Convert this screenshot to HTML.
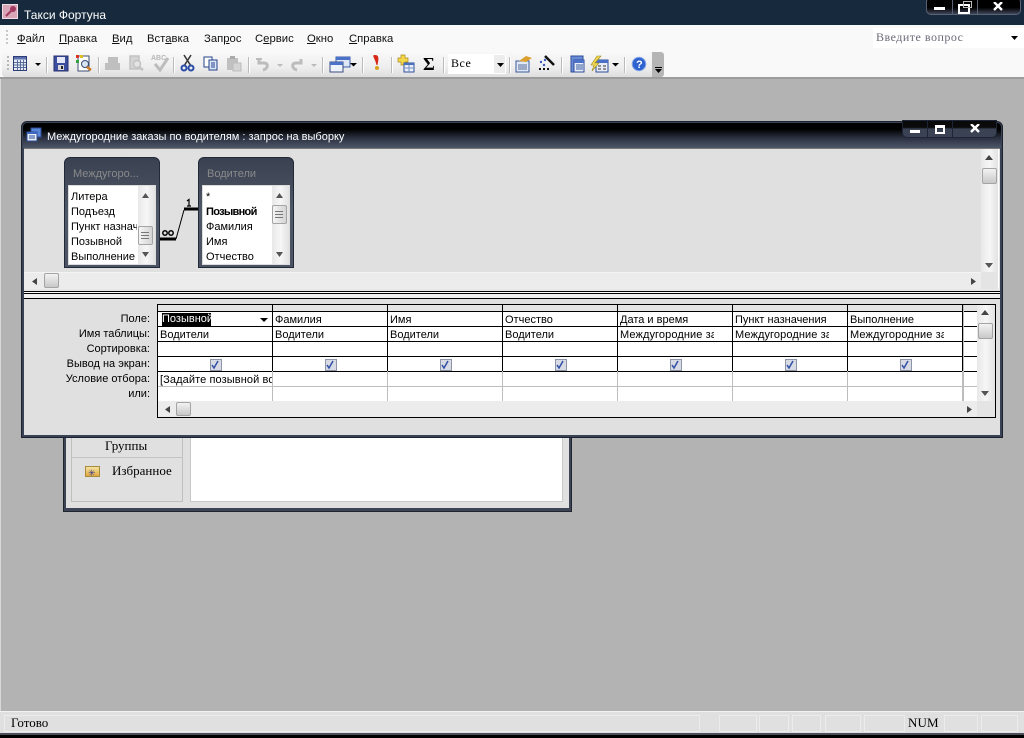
<!DOCTYPE html>
<html><head><meta charset="utf-8"><style>
html,body{margin:0;padding:0}
body{width:1024px;height:738px;overflow:hidden;position:relative;background:#b3b3b3;font-family:"Liberation Sans",sans-serif;font-size:11px;color:#000}
div,span.a,svg{position:absolute}
.t{white-space:nowrap;line-height:14px}
.s{font-family:"Liberation Serif",serif;font-size:12px}
.m{top:32px;font-size:11.3px;color:#111}
.sep{top:57px;width:1px;height:16px;background:#bbb;box-shadow:1px 0 0 #fff}
.l{background:#000}.g{background:#bdbdbd}
.lab{right:874px;text-align:right;font-size:11px}
.c{font-size:11px;overflow:hidden;letter-spacing:.1px}
.chk{width:10px;height:10px;border:1px solid #8d95a8;background:#d8dbe4;top:359px}
.sb{background:linear-gradient(90deg,#e8e8e8,#f6f6f6,#e2e2e2)}
.th{background:linear-gradient(#f2f2f2,#c8c8c8);border:1px solid #a4a4a4;border-radius:2px;box-sizing:border-box}
.tbl{width:96px;height:111px;top:157px;background:linear-gradient(#3a4150,#4f5869 50%,#4b5364);border:1px solid #222a38;box-sizing:border-box;border-radius:6px 6px 0 0}
</style></head><body>
<!-- top title -->
<div style="left:0;top:0;width:1024px;height:25px;background:#172a3d"></div>
<div style="left:2px;top:4px;width:16px;height:15px;background:#d9a6b8;border:1px solid #f0dce4;box-sizing:border-box"></div>
<svg style="left:3px;top:5px" width="14" height="13"><circle cx="10" cy="4" r="3" fill="#a03a60"/><path d="M8 6L3 11" stroke="#a03a60" stroke-width="2"/></svg>
<div class="t" style="left:24px;top:8px;color:#fff;font-size:12px">Такси Фортуна</div>
<div style="left:926px;top:-3px;width:95px;height:18px;background:linear-gradient(#000 60%,#3d4558);border:1px solid #5a6274;border-radius:5px;box-sizing:border-box"></div>
<div style="left:952px;top:0;width:1px;height:15px;background:#5a6274"></div>
<div style="left:977px;top:0;width:1px;height:15px;background:#5a6274"></div>
<div style="left:934px;top:7px;width:11px;height:3px;background:#fff"></div>
<div style="left:958px;top:4px;width:8px;height:6px;border:2px solid #fff"></div>
<div style="left:963px;top:1px;width:7px;height:5px;border:1px solid #bbb"></div>
<svg style="left:993px;top:2px" width="10" height="9"><path d="M1 0L9 8M9 0L1 8" stroke="#fff" stroke-width="2.4"/></svg>
<!-- menu -->
<div style="left:0;top:25px;width:1024px;height:52px;background:#f9f9f9"></div>
<div style="left:6px;top:30px;width:2px;height:14px;background:repeating-linear-gradient(#c8c8c8 0 2px,transparent 2px 4px)"></div>
<div class="t m" style="left:17px"><u>Ф</u>айл</div>
<div class="t m" style="left:59px"><u>П</u>равка</div>
<div class="t m" style="left:112px"><u>В</u>ид</div>
<div class="t m" style="left:147px">Вст<u>а</u>вка</div>
<div class="t m" style="left:204px">Зап<u>р</u>ос</div>
<div class="t m" style="left:255px">С<u>е</u>рвис</div>
<div class="t m" style="left:307px"><u>О</u>кно</div>
<div class="t m" style="left:349px"><u>С</u>правка</div>
<div style="left:873px;top:28px;width:151px;height:20px;background:#fff"></div>
<div class="t s" style="left:876px;top:30px;color:#6a6a78;letter-spacing:.5px">Введите вопрос</div>
<svg style="left:1011px;top:36px" width="7" height="4"><path d="M0 0H7L3.5 4Z"/></svg>
<!-- toolbar -->
<div style="left:2px;top:52px;width:650px;height:25px;background:linear-gradient(#f8f8f8,#eee 60%,#dedede);border-radius:3px 0 0 3px"></div>
<div style="left:652px;top:52px;width:12px;height:25px;background:#b5b5b5;border-radius:0 3px 3px 0"></div>
<div style="left:655px;top:67px;width:7px;height:1px;background:#000"></div>
<svg style="left:655px;top:69px" width="7" height="4"><path d="M0 0H7L3.5 4Z"/></svg>
<div style="left:0;top:77px;width:1024px;height:2px;background:#9c9c9c"></div>
<div style="left:0;top:79px;width:1px;height:633px;background:#d8d8d8"></div>
<div style="left:7px;top:56px;width:2px;height:16px;background:repeating-linear-gradient(#b8b8b8 0 2px,transparent 2px 4px)"></div>
<div class="sep" style="left:46px"></div><div class="sep" style="left:98px"></div><div class="sep" style="left:173px"></div><div class="sep" style="left:248px"></div><div class="sep" style="left:322px"></div><div class="sep" style="left:362px"></div><div class="sep" style="left:391px"></div><div class="sep" style="left:443px"></div><div class="sep" style="left:509px"></div><div class="sep" style="left:561px"></div><div class="sep" style="left:624px"></div>
<svg style="left:0;top:50px" width="660" height="28" fill="none">
<!-- datasheet -->
<rect x="13.5" y="6.500" width="13" height="14" fill="#e8ecf6" stroke="#2b3d72"/><path d="M14 9.500H26V7H14Z" fill="#5a70b0"/><path d="M14 12.500H26M14 15H26M14 17.500H26M17.500 10V20M20.500 10V20M23.500 10V20" stroke="#5a6c9c"/>
<path d="M35 13H41L38 16Z" fill="#000"/>
<!-- save -->
<rect x="54" y="6" width="14" height="15" fill="#3c4ea0" stroke="#26306e"/><rect x="57" y="7" width="8" height="6" fill="#e4e8f6"/><rect x="58" y="15" width="6" height="5" fill="#d8d8d8"/><rect x="61" y="16" width="2" height="3" fill="#222"/>
<!-- search file -->
<rect x="78" y="6" width="11" height="15" fill="#fff" stroke="#3c4e70"/><rect x="76" y="5" width="3" height="3" fill="#e03020"/><rect x="80" y="5" width="3" height="3" fill="#e0c020"/><rect x="76" y="10" width="3" height="3" fill="#30a040"/><circle cx="85" cy="14" r="3.500" fill="#d8e4f4" stroke="#3a4c70"/><path d="M87 17L91 20" stroke="#d07820" stroke-width="2.500"/>
<!-- print disabled -->
<g fill="#bfbfbf"><rect x="105" y="13" width="15" height="7"/><path d="M108 7H118V13H108Z"/></g>
<g stroke="#c2c2c2" stroke-width="1.500"><rect x="130" y="6" width="9" height="13" fill="#d4d4d4"/><circle cx="137" cy="14" r="3.500" fill="#e4e4e4"/><path d="M139 17L143 20" stroke-width="2.500"/></g>
<text x="151" y="10" font-family="Liberation Sans" font-size="7" font-weight="bold" fill="#b8b8b8">ABC</text>
<path d="M155 14L160 20L168 8" stroke="#bdbdbd" stroke-width="3"/>
<!-- cut -->
<path d="M184 5L191 16M191 5L184 16" stroke="#3a3a3a" stroke-width="1.600"/><circle cx="184" cy="18" r="2.500" stroke="#2a4ca8" stroke-width="2"/><circle cx="191" cy="18" r="2.500" stroke="#2a4ca8" stroke-width="2"/>
<!-- copy -->
<rect x="204" y="7" width="8" height="10" fill="#fff" stroke="#24418a"/><rect x="209" y="10" width="8" height="10" fill="#dce6f8" stroke="#24418a"/><path d="M211 13H215M211 15H215M211 17H215" stroke="#24418a"/>
<!-- paste dis -->
<rect x="227" y="8" width="11" height="12" fill="#c0c0c0"/><rect x="230" y="6" width="5" height="3" fill="#aaa"/><rect x="233" y="13" width="8" height="8" fill="#d4d4d4" stroke="#bbb"/>
<!-- undo/redo -->
<path d="M259 9L259 13L264 13C269 13 268 19 263 20" stroke="#bcbcbc" stroke-width="3"/><path d="M256 9H262" stroke="#bcbcbc" stroke-width="2"/>
<path d="M277 14H283L280 17Z" fill="#bbb"/>
<path d="M301 9L301 13L296 13C291 13 292 19 297 20" stroke="#bcbcbc" stroke-width="3"/>
<path d="M311 14H317L314 17Z" fill="#bbb"/>
<!-- window -->
<rect x="336" y="7" width="14" height="10" fill="#dfe6f6" stroke="#3a5aa8"/><path d="M336 7H350V10H336Z" fill="#4a72c8"/><rect x="330" y="12" width="13" height="10" fill="#eef2fa" stroke="#3a4c80"/><path d="M330 12H343V15H330Z" fill="#4a72c8"/>
<path d="M350 13H357L353.500 16.500Z" fill="#000"/>
<!-- exclamation -->
<path d="M375 5C379 5 379 8 377.500 15H376.500C375 8 371 5 375 5Z" fill="#d82818"/><circle cx="377" cy="18" r="2" fill="#d8a020"/>
<!-- add table -->
<path d="M398 8H401V5H405V8H408V12H405V15H401V12H398Z" fill="#f4d848" stroke="#a88820" stroke-width=".7"/><rect x="404" y="13" width="10" height="9" fill="#e8eef8" stroke="#2e5098"/><path d="M404 13H414V15H404Z" fill="#4a70c0"/><path d="M409 15V22M404 18H414" stroke="#7890c0"/>
<!-- props -->
<rect x="516" y="11" width="13" height="11" fill="#dfe8f4" stroke="#3c5a9c"/><path d="M518 15H527M518 17H527M518 19H527" stroke="#5a6c9c"/><path d="M519 11L526 6L532 8L526 12Z" fill="#dca030"/>
<!-- wand -->
<path d="M545 6L554 15" stroke="#111" stroke-width="2.500"/><circle cx="541" cy="12" r="1.200" fill="#3a5ac0"/><circle cx="545" cy="10" r="1.200" fill="#3a5ac0"/><circle cx="544" cy="15" r="1.200" fill="#3a5ac0"/>
<path d="M539 19H541M543 19H545M547 19H549" stroke="#111" stroke-width="2"/>
<!-- db window -->
<rect x="571" y="6" width="12" height="16" fill="#6a8cd8" stroke="#2e4c98"/><rect x="574" y="10" width="10" height="12" fill="#e8eef8" stroke="#2e4c98"/><path d="M574 10H584V13H574Z" fill="#4a70c8"/><path d="M576 15H583M576 17H583M576 19H583" stroke="#3a5aa0"/>
<!-- new object -->
<rect x="596" y="10" width="12" height="12" fill="#e8ecf4" stroke="#2e4c98"/><path d="M596 10H608V13H596Z" fill="#4a70c8"/><path d="M598 16H601M603 16H606M598 19H601M603 19H606" stroke="#333"/><path d="M597 6H601L595 13H599L592 21L594 15H591Z" fill="#f0d850" stroke="#a08820" stroke-width=".6"/>
<path d="M612 13H619L615.500 16.500Z" fill="#000"/>
<!-- help -->
<circle cx="639" cy="14" r="6.800" fill="#2e62d0" stroke="#8aa8e8"/><text x="636" y="18" font-family="Liberation Sans" font-size="11" font-weight="bold" fill="#fff">?</text>
</svg>
<div class="t" style="left:423px;top:55px;font:bold 18px/18px 'Liberation Serif',serif">Σ</div>
<div style="left:448px;top:54px;width:58px;height:20px;background:#fff"></div>
<div class="t s" style="left:451px;top:56px;letter-spacing:.5px">Все</div>
<div style="left:494px;top:55px;width:11px;height:18px;background:#ececec"></div>
<svg style="left:497px;top:63px" width="7" height="4"><path d="M0 0H7L3.500 4Z"/></svg>
<!-- back window -->
<div style="left:63px;top:430px;width:509px;height:82px;background:#3c4456;box-sizing:border-box;border:1px solid #20242e"></div>
<div style="left:66px;top:430px;width:503px;height:78px;background:#e0e0e0"></div>
<div style="left:71px;top:430px;width:112px;height:72px;border:1px solid #bfbfbf;border-top:none;box-sizing:border-box"></div>
<div style="left:190px;top:430px;width:373px;height:72px;background:#fff;border-right:1px solid #c8c8c8;border-bottom:1px solid #c8c8c8;border-left:1px solid #c8c8c8;box-sizing:border-box"></div>
<div class="t s" style="left:105px;top:439px;font-size:13px">Группы</div>
<div style="left:72px;top:457px;width:110px;height:1px;background:#c4c4c4"></div>
<div style="left:85px;top:466px;width:15px;height:11px;background:linear-gradient(#f4e4a0,#e0a840);border:1px solid #a88a3c;box-sizing:border-box"></div>
<div class="t" style="left:88px;top:466px;font-size:9px;color:#3a3a90">✳</div>
<div class="t s" style="left:112px;top:464px;font-size:13px">Избранное</div>
<!-- query window -->
<div style="left:21px;top:121px;width:982px;height:317px;background:#3a4354;border:1px solid #1c2230;box-sizing:border-box;border-radius:6px 6px 0 0"></div>
<div style="left:23px;top:123px;width:978px;height:25px;background:linear-gradient(#000 25%,#2b3140 60%,#4e566a);border-radius:4px 4px 0 0"></div>
<div style="left:24px;top:148px;width:976px;height:287px;background:#e0e0e0;border-top:1px solid #777;box-sizing:border-box"></div>
<svg style="left:26px;top:127px" width="16" height="15"><rect x="5" y="1" width="10" height="9" fill="#5a86d8" stroke="#2d4c98"/><rect x="1" y="5" width="10" height="9" fill="#e8eef8" stroke="#2d4c98"/><path d="M1 5H11V7H1Z" fill="#3d68c0"/><path d="M3 9H9M3 11H9" stroke="#2d4c98"/></svg>
<div class="t" style="left:47px;top:130px;color:#fff;font-size:11px">Междугородние заказы по водителям : запрос на выборку</div>
<div style="left:902px;top:120px;width:95px;height:18px;background:linear-gradient(#0a0a0a 40%,#3a4254 50%);border:1px solid #1e2534;border-radius:0 0 5px 5px;box-sizing:border-box"></div>
<div style="left:927px;top:121px;width:1px;height:16px;background:#1e2534"></div>
<div style="left:952px;top:121px;width:1px;height:16px;background:#1e2534"></div>
<div style="left:910px;top:130px;width:10px;height:3px;background:#fff"></div>
<div style="left:935px;top:125px;width:6px;height:4px;border:2px solid #fff;border-top-width:3px"></div>
<svg style="left:970px;top:124px" width="10" height="9"><path d="M1 0L9 8M9 0L1 8" stroke="#fff" stroke-width="2.400"/></svg>
<!-- top pane scroll -->
<div style="left:24px;top:272px;width:957px;height:17px;background:#ececec;border-top:1px solid #f4f4f4;box-sizing:border-box"></div>
<div class="sb" style="left:981px;top:149px;width:17px;height:123px"></div>
<div style="left:981px;top:272px;width:17px;height:17px;background:#e4e4e4"></div>
<div style="left:998px;top:149px;width:1px;height:140px;background:#fff"></div>
<svg style="left:985px;top:155px" width="8" height="5"><path d="M0 5H8L4 0Z" fill="#444"/></svg>
<svg style="left:985px;top:263px" width="8" height="5"><path d="M0 0H8L4 5Z" fill="#555"/></svg>
<div class="th" style="left:982px;top:168px;width:15px;height:16px"></div>
<svg style="left:32px;top:278px" width="5" height="7"><path d="M5 0V7L0 3.500Z" fill="#444"/></svg>
<svg style="left:971px;top:278px" width="5" height="7"><path d="M0 0V7L5 3.500Z" fill="#444"/></svg>
<div class="th" style="left:44px;top:273px;width:15px;height:15px"></div>
<!-- split -->
<div style="left:24px;top:289px;width:976px;height:2px;background:#e8e8e8"></div>
<div style="left:24px;top:291px;width:976px;height:1px;background:#000"></div>
<div style="left:24px;top:292px;width:976px;height:1px;background:#fff"></div>
<div style="left:24px;top:293px;width:976px;height:1px;background:#000"></div>
<div style="left:24px;top:294px;width:976px;height:4px;background:#f0f0f0"></div>
<div style="left:24px;top:298px;width:976px;height:1px;background:#000"></div>
<!-- field tables -->
<div class="tbl" style="left:64px"></div>
<div class="tbl" style="left:198px"></div>
<div class="t" style="left:73px;top:167px;color:#8a8a8a">Междугоро...</div>
<div class="t" style="left:207px;top:167px;color:#8a8a8a">Водители</div>
<div style="left:68px;top:185px;width:88px;height:80px;background:#fff;border:1px solid #dcdcdc;box-sizing:border-box"></div>
<div style="left:202px;top:185px;width:88px;height:80px;background:#fff;border:1px solid #dcdcdc;box-sizing:border-box"></div>
<div class="sb" style="left:138px;top:186px;width:17px;height:78px"></div>
<div class="sb" style="left:272px;top:186px;width:17px;height:78px"></div>
<div class="t" style="left:71px;top:190px">Литера</div>
<div class="t" style="left:71px;top:205px">Подъезд</div>
<div class="t" style="left:71px;top:220px;width:66px;overflow:hidden">Пункт назначения</div>
<div class="t" style="left:71px;top:235px">Позывной</div>
<div class="t" style="left:71px;top:250px">Выполнение</div>
<div class="t" style="left:206px;top:190px">*</div>
<div class="t" style="left:206px;top:205px;font-weight:bold;letter-spacing:-.7px">Позывной</div>
<div class="t" style="left:206px;top:220px">Фамилия</div>
<div class="t" style="left:206px;top:235px">Имя</div>
<div class="t" style="left:206px;top:250px">Отчество</div>
<svg style="left:142px;top:193px" width="8" height="5"><path d="M0 5H7L3.500 0Z" fill="#555"/></svg>
<svg style="left:142px;top:252px" width="8" height="5"><path d="M0 0H7L3.500 5Z" fill="#555"/></svg>
<svg style="left:276px;top:193px" width="8" height="5"><path d="M0 5H7L3.500 0Z" fill="#555"/></svg>
<svg style="left:276px;top:252px" width="8" height="5"><path d="M0 0H7L3.500 5Z" fill="#555"/></svg>
<div class="th" style="left:138px;top:226px;width:15px;height:19px;background:linear-gradient(90deg,#f4f4f4,#d4d4d4)"></div>
<div class="th" style="left:272px;top:205px;width:15px;height:19px;background:linear-gradient(90deg,#f4f4f4,#d4d4d4)"></div>
<svg style="left:141px;top:231px" width="9" height="9"><path d="M0 1.500H8M0 4.500H8M0 7.500H8" stroke="#777"/></svg>
<svg style="left:275px;top:210px" width="9" height="9"><path d="M0 1.500H8M0 4.500H8M0 7.500H8" stroke="#777"/></svg>
<!-- relation -->
<svg style="left:155px;top:195px" width="50" height="55" fill="none"><path d="M5 44H21" stroke="#000" stroke-width="3"/><path d="M21 44L29 15" stroke="#000"/><path d="M29 14H43" stroke="#000" stroke-width="3"/>
<circle cx="10" cy="38" r="2.200" stroke="#000" stroke-width="1.500"/><circle cx="16" cy="38" r="2.200" stroke="#000" stroke-width="1.500"/><path d="M32 6L34 4.500V11M32 11H36" stroke="#000" stroke-width="1.200"/></svg>
<!-- labels -->
<div class="t lab" style="top:312px">Поле:</div>
<div class="t lab" style="top:327px">Имя таблицы:</div>
<div class="t lab" style="top:342px">Сортировка:</div>
<div class="t lab" style="top:357px">Вывод на экран:</div>
<div class="t lab" style="top:372px">Условие отбора:</div>
<div class="t lab" style="top:387px">или:</div>
<!-- grid -->
<div style="left:157px;top:304px;width:839px;height:114px;background:#fff;border:1px solid #000;box-sizing:border-box"></div>
<div style="left:158px;top:305px;width:819px;height:6px;background:#e4e4e4"></div>
<div class="l" style="left:158px;top:311px;width:819px;height:1px"></div>
<div class="l" style="left:158px;top:326px;width:819px;height:1px"></div>
<div class="l" style="left:158px;top:341px;width:819px;height:1px"></div>
<div class="l" style="left:158px;top:356px;width:819px;height:1px"></div>
<div class="l" style="left:158px;top:371px;width:819px;height:1px"></div>
<div class="g" style="left:158px;top:386px;width:819px;height:1px"></div>
<div class="l" style="left:272px;top:305px;width:1px;height:66px"></div><div class="g" style="left:272px;top:371px;width:1px;height:30px"></div>
<div class="l" style="left:387px;top:305px;width:1px;height:66px"></div><div class="g" style="left:387px;top:371px;width:1px;height:30px"></div>
<div class="l" style="left:502px;top:305px;width:1px;height:66px"></div><div class="g" style="left:502px;top:371px;width:1px;height:30px"></div>
<div class="l" style="left:617px;top:305px;width:1px;height:66px"></div><div class="g" style="left:617px;top:371px;width:1px;height:30px"></div>
<div class="l" style="left:732px;top:305px;width:1px;height:66px"></div><div class="g" style="left:732px;top:371px;width:1px;height:30px"></div>
<div class="l" style="left:847px;top:305px;width:1px;height:66px"></div><div class="g" style="left:847px;top:371px;width:1px;height:30px"></div>
<div class="l" style="left:962px;top:305px;width:1px;height:66px"></div><div class="g" style="left:962px;top:371px;width:2px;height:30px"></div><div class="g" style="left:963px;top:305px;width:1px;height:66px"></div>
<div class="sb" style="left:977px;top:305px;width:18px;height:96px"></div>
<div style="left:158px;top:401px;width:819px;height:16px;background:#ececec"></div>
<div style="left:977px;top:401px;width:18px;height:16px;background:#e4e4e4"></div>
<svg style="left:981px;top:310px" width="8" height="5"><path d="M0 5H8L4 0Z" fill="#444"/></svg>
<svg style="left:981px;top:391px" width="8" height="5"><path d="M0 0H8L4 5Z" fill="#555"/></svg>
<div class="th" style="left:978px;top:323px;width:15px;height:16px"></div>
<svg style="left:165px;top:406px" width="5" height="7"><path d="M5 0V7L0 3.500Z" fill="#444"/></svg>
<svg style="left:967px;top:406px" width="5" height="7"><path d="M0 0V7L5 3.500Z" fill="#444"/></svg>
<div class="th" style="left:176px;top:402px;width:15px;height:14px"></div>
<!-- row 1 -->
<div class="t" style="left:162px;top:313px;width:49px;height:13px;line-height:13px;background:#000;color:#fff;overflow:hidden">Позывной</div>
<svg style="left:260px;top:318px" width="8" height="4"><path d="M0 0H8L4 4Z"/></svg>
<div class="t" style="left:275px;top:313px">Фамилия</div>
<div class="t" style="left:390px;top:313px">Имя</div>
<div class="t" style="left:505px;top:313px">Отчество</div>
<div class="t" style="left:620px;top:313px">Дата и время</div>
<div class="t" style="left:735px;top:313px">Пункт назначения</div>
<div class="t" style="left:850px;top:313px">Выполнение</div>
<!-- row 2 -->
<div class="t" style="left:160px;top:328px">Водители</div>
<div class="t" style="left:275px;top:328px">Водители</div>
<div class="t" style="left:390px;top:328px">Водители</div>
<div class="t" style="left:505px;top:328px">Водители</div>
<div class="t c" style="left:620px;top:328px;width:94px">Междугородние заказы</div>
<div class="t c" style="left:735px;top:328px;width:94px">Междугородние заказы</div>
<div class="t c" style="left:850px;top:328px;width:94px">Междугородние заказы</div>
<!-- row 5 -->
<div class="t c" style="left:160px;top:373px;width:112px">[Задайте позывной водителя]</div>
<!-- checks -->
<div class="chk" style="left:210px"></div><div class="chk" style="left:325px"></div><div class="chk" style="left:440px"></div><div class="chk" style="left:555px"></div><div class="chk" style="left:670px"></div><div class="chk" style="left:785px"></div><div class="chk" style="left:900px"></div>
<svg style="left:0;top:355px" width="1024" height="20" fill="none" stroke="#2f4fa8" stroke-width="1.500"><path d="M212 10L214 13L218 6M327 10L329 13L333 6M442 10L444 13L448 6M557 10L559 13L563 6M672 10L674 13L678 6M787 10L789 13L793 6M902 10L904 13L908 6"/></svg>
<!-- status bar -->
<div style="left:0;top:711px;width:1024px;height:1px;background:#f2f2f2"></div>
<div style="left:0;top:712px;width:1024px;height:21px;background:#e0e0e0"></div>
<div style="left:0;top:733px;width:1024px;height:2px;background:#4a4f5a"></div>
<div style="left:0;top:735px;width:1024px;height:3px;background:#000"></div>
<div style="left:4px;top:715px;width:696px;height:17px;border:1px solid #ececec;box-sizing:border-box"></div>
<div style="left:719px;top:715px;width:38px;height:17px;border:1px solid #ececec;box-sizing:border-box"></div>
<div style="left:759px;top:715px;width:30px;height:17px;border:1px solid #ececec;box-sizing:border-box"></div>
<div style="left:792px;top:715px;width:29px;height:17px;border:1px solid #ececec;box-sizing:border-box"></div>
<div style="left:825px;top:715px;width:36px;height:17px;border:1px solid #ececec;box-sizing:border-box"></div>
<div style="left:864px;top:715px;width:41px;height:17px;border:1px solid #ececec;box-sizing:border-box"></div>
<div style="left:944px;top:715px;width:34px;height:17px;border:1px solid #ececec;box-sizing:border-box"></div>
<div style="left:981px;top:715px;width:37px;height:17px;border:1px solid #ececec;box-sizing:border-box"></div>
<div class="t s" style="left:11px;top:716px;font-size:13px">Готово</div>
<div class="t s" style="left:908px;top:716px;font-size:13px;letter-spacing:.1px">NUM</div>
</body></html>
